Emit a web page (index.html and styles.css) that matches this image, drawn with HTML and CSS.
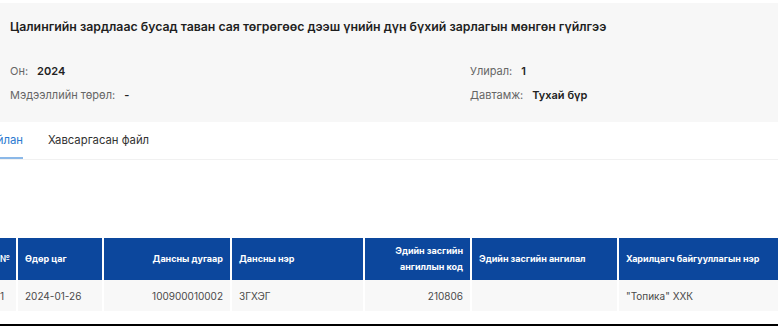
FILE: index.html
```html
<!DOCTYPE html>
<html lang="mn">
  <head>
    <meta charset="UTF-8" />
    <meta name="viewport" content="width=device-width, initial-scale=1.0" />
    <title>Гүйлгээ</title>
    <link rel="stylesheet" href="styles.css">
  </head>
  <body>
    <div class="summary">
      <h1>Цалингийн зардлаас бусад таван сая төгрөгөөс дээш үнийн дүн бүхий зарлагын мөнгөн гүйлгээ</h1>
      <div class="info">
        <div class="info-item"><span class="label">Он:</span><span class="value">2024</span></div>
        <div class="info-item"><span class="label">Улирал:</span><span class="value">1</span></div>
        <div class="info-item"><span class="label">Мэдээллийн төрөл:</span><span class="value">-</span></div>
        <div class="info-item"><span class="label">Давтамж:</span><span class="value">Тухай бүр</span></div>
      </div>
    </div>

    <div class="tabs">
      <div class="tab active">Тайлан</div>
      <div class="tab">Хавсаргасан файл</div>
    </div>

    <table class="report">
      <colgroup>
        <col class="col-no" />
        <col class="col-date" />
        <col class="col-acc" />
        <col class="col-name" />
        <col class="col-code" />
        <col class="col-cat" />
        <col class="col-org" />
      </colgroup>
      <thead>
        <tr>
          <th>№</th>
          <th>Өдөр цаг</th>
          <th class="num">Дансны дугаар</th>
          <th>Дансны нэр</th>
          <th class="num">Эдийн засгийн ангиллын код</th>
          <th>Эдийн засгийн ангилал</th>
          <th>Харилцагч байгууллагын нэр</th>
        </tr>
      </thead>
      <tbody>
        <tr>
          <td>1</td>
          <td>2024-01-26</td>
          <td class="num">100900010002</td>
          <td>ЗГХЭГ</td>
          <td class="num">210806</td>
          <td></td>
          <td>"Топика" ХХК</td>
        </tr>
      </tbody>
    </table>
    <div class="bottom-line"></div>
  </body>
</html>
```

FILE: styles.css
```css
body {
  margin: 0;
  font-family: Inter, "Noto Sans", sans-serif;
  color: #222;
  background-color: #fff;
  overflow: hidden;
}

.summary {
  margin-top: 3px;
  height: 119px;
  box-sizing: border-box;
  padding: 15px 10px 0 10px;
  background-color: #f7f7f7;
}

.summary h1 {
  margin: 0;
  font-size: 12.3px;
  font-weight: 600;
  line-height: 18px;
  color: #1f1f1f;
}

.info {
  display: grid;
  grid-template-columns: 460px 1fr;
  row-gap: 6px;
  margin-top: 26px;
}

.info-item {
  font-size: 11px;
  line-height: 18px;
}

.info-item .label {
  color: #666;
  margin-right: 9px;
}

.info-item .value {
  font-weight: 600;
  color: #222;
}

/* the tab bar and table are scrolled a little to the left */
.tabs {
  display: flex;
  gap: 25px;
  height: 37px;
  margin-left: -16px;
  border-bottom: 1px solid #f1f1f1;
}

.tab {
  font-size: 11.3px;
  line-height: 36px;
  color: #333;
}

.tab.active {
  color: #2a7ad0;
  border-bottom: 2px solid #8bb8e8;
  line-height: 34px;
  padding-top: 1px;
}

.report {
  margin-top: 78px;
  margin-left: -7px;
  border-collapse: separate;
  border-spacing: 0;
  table-layout: fixed;
  width: 813px;
}

.report th,
.report td {
  padding: 0 7px;
  border-right: 2px solid #fff;
  text-align: left;
}

.report th {
  height: 42px;
  background-color: #0c479d;
  color: #fff;
  font-size: 9px;
  font-weight: 700;
  line-height: 16px;
}

.report td {
  height: 31px;
  background-color: #f8f8f8;
  font-size: 10px;
  color: #4a4a4a;
}

.report .num {
  text-align: right;
}

.col-no { width: 25px; }
.col-date { width: 86px; }
.col-acc { width: 128px; }
.col-name { width: 133px; }
.col-code { width: 107px; }
.col-cat { width: 147px; }
.col-org { width: 187px; }

.bottom-line {
  margin-top: 13px;
  border-top: 2px solid #000;
}
```
